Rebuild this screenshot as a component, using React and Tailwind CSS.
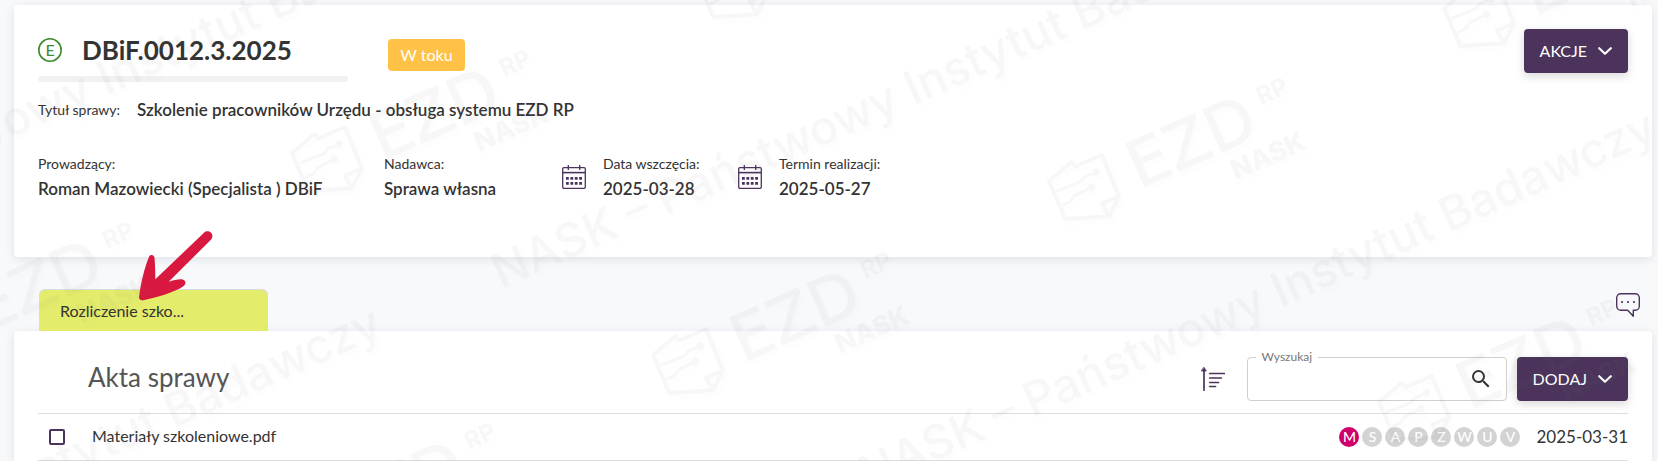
import { MdSearch } from 'react-icons/md';

const permissions = [
    { letter: 'M', active: true },
    { letter: 'S' },
    { letter: 'A' },
    { letter: 'P' },
    { letter: 'Z' },
    { letter: 'W' },
    { letter: 'U' },
    { letter: 'V' },
];

const files = [{ id: 1, name: 'Materiały szkoleniowe.pdf', date: '2025-03-31' }];

// Watermark positions, logo = top left corner of the document sign, text = start of the baseline
const watermarkLogos = [
    [-106, 297],
    [256, 498],
    [291, 125],
    [652, 327],
    [696, -49],
    [1048, 153],
    [1378, 374],
    [1443, -20],
];

const watermarkTexts = [
    [-306, 279],
    [-407, 687],
    [501, 289],
    [868, 491],
];

function Chevron() {
    return (
        <svg viewBox="0 0 14 8" className="w-[14px] h-2" fill="none" stroke="currentColor" strokeWidth="2.2" strokeLinecap="round" strokeLinejoin="round">
            <path d="M1.2 1.2 7 6.8l5.8-5.6" />
        </svg>
    );
}

function CalendarIcon() {
    return (
        <svg viewBox="0 0 24 24" className="size-6 mt-[10px] text-[#4b335b] shrink-0" fill="none" stroke="currentColor" strokeWidth="1.3">
            <rect x="0.7" y="2.7" width="22.6" height="20.6" rx="1.2" />
            <path d="M1 7.6h22" strokeWidth="1.6" />
            <path d="M6.3 0v5M17.7 0v5" />
            <path d="M4 13.4h16M4 18.4h16" strokeWidth="2.8" strokeDasharray="2.8 1.6" />
        </svg>
    );
}

function ChatIcon() {
    return (
        <svg viewBox="0 0 24 24" className="size-6" fill="none" stroke="currentColor" strokeWidth="1.4" strokeLinejoin="round">
            <path d="M4.7.7h14.6a4 4 0 0 1 4 4v8.6a4 4 0 0 1-4 4h-2v5.9l-5.6-5.9h-7a4 4 0 0 1-4-4V4.7a4 4 0 0 1 4-4Z" />
            <g fill="currentColor" stroke="none">
                <circle cx="6" cy="9" r="1.1" />
                <circle cx="12" cy="9" r="1.1" />
                <circle cx="18" cy="9" r="1.1" />
            </g>
        </svg>
    );
}

function SortIcon() {
    return (
        <svg viewBox="0 0 24 24" className="size-6" fill="none" stroke="currentColor" strokeWidth="1.7" strokeLinecap="round">
            <path d="M3 3v20.2" />
            <path d="M3 .5 5.3 4H.7Z" fill="currentColor" strokeWidth="0.8" strokeLinejoin="round" />
            <path d="M8.8 6.5h14.5M8.8 11h11.5M8.8 15.5h8.7M8.8 19.5h5.7" />
        </svg>
    );
}

function ElectronicIcon() {
    return (
        <svg viewBox="0 0 24 24" className="size-6 text-[#3f8a2e]" role="img" aria-label="Sprawa elektroniczna">
            <circle cx="12" cy="12" r="11.2" fill="none" stroke="currentColor" strokeWidth="1.6" />
            <text x="12" y="17.5" textAnchor="middle" fontFamily="Lato, sans-serif" fontSize="16" fill="currentColor">
                E
            </text>
        </svg>
    );
}

function Arrow() {
    return (
        <svg viewBox="0 0 270 270" className="absolute left-[116px] -top-[69px] size-[90px] pointer-events-none" fill="#d8183f" aria-hidden="true">
            <path d="M27 232C32 190 43 145 57 110C60 103 71 103 73 111C75 125 76 155 76 178L222 38C232 27 252 37 246 54C243 60 238 64 233 69L116 185C130 181 145 177 155 178C168 180 170 192 160 199C130 219 80 232 40 241C32 242 27 239 27 232Z" />
        </svg>
    );
}

function Watermark() {
    return (
        <svg
            className="absolute inset-0 w-full h-full overflow-hidden pointer-events-none opacity-[0.06] [filter:drop-shadow(3px_4px_2px_rgba(128,128,128,0.3))]"
            fill="#808080"
            aria-hidden="true"
        >
            {watermarkLogos.map(([x, y]) => (
                <g key={`${x}-${y}`} transform={`translate(${x} ${y})`} fontFamily="Inter, sans-serif">
                    <g transform="scale(0.333) translate(-145 -310)" fill="none" stroke="#808080" strokeWidth="12" strokeLinejoin="round">
                        <path d="M148 395 215 337l13 13 79-34 51 124-30 60-131 8Z" />
                        <path d="M358 440l-51 22 21 38" />
                        <path d="M170 425l72-28 13-15 35-15M188 468l24-11 13-19 50-25" strokeWidth="9" />
                        <circle cx="290" cy="367" r="11" fill="#808080" stroke="none" />
                        <circle cx="275" cy="413" r="11" fill="#808080" stroke="none" />
                    </g>
                    <text transform="translate(91 36) rotate(-24)" fontSize="64" fontFamily="DejaVu Sans, sans-serif" stroke="#808080">
                        EZD
                    </text>
                    <text transform="translate(213 -48) rotate(-24)" fontSize="24" fontWeight="700">
                        RP
                    </text>
                    <text transform="translate(188 27) rotate(-24)" fontSize="27" fontWeight="800">
                        NASK
                    </text>
                </g>
            ))}
            {watermarkTexts.map(([x, y]) => (
                <text
                    key={`${x}-${y}`}
                    transform={`translate(${x} ${y}) rotate(-24)`}
                    fontFamily="Inter, sans-serif"
                    fontSize="47"
                    fontWeight="500"
                >
                    NASK – Państwowy Instytut Badawczy
                </text>
            ))}
        </svg>
    );
}

function MenuButton({ label }) {
    return (
        <button
            type="button"
            aria-haspopup="menu"
            className="h-11 px-4 flex items-center gap-[11px] rounded bg-[#4b335b] text-white text-base shadow-[0_3px_10px_rgba(0,0,0,0.16)]"
        >
            {label}
            <Chevron />
        </button>
    );
}

function Detail({ label, value, icon }) {
    return (
        <div className="flex gap-[17px]">
            {icon}
            <dl>
                <dt className="text-sm leading-[18px]">{label}</dt>
                <dd className="mt-1 text-[17px] leading-6 font-semibold">{value}</dd>
            </dl>
        </div>
    );
}

function CaseHeader() {
    return (
        <section className="px-6 pt-6 pb-14 rounded bg-white shadow-[0_2px_10px_rgba(80,100,110,0.16)]">
            <div className="flex items-start">
                <div className="w-[310px]">
                    <div className="mt-2 h-[26px] flex items-center gap-5">
                        <ElectronicIcon />
                        <h1 className="text-[26px] leading-[26px] font-bold">DBiF.0012.3.2025</h1>
                    </div>
                    <div className="mt-[13px] h-[6px] rounded-full bg-[#f0f1f3]" />
                </div>
                <span className="ml-10 mt-[10px] h-8 px-3 min-w-[77px] flex items-center justify-center rounded bg-[#ffc247] text-white">W toku</span>
                <div className="ml-auto">
                    <MenuButton label="AKCJE" />
                </div>
            </div>
            <div className="mt-4 h-6 flex items-center gap-[17px]">
                <span className="text-sm">Tytuł sprawy:</span>
                <span className="text-[17px] font-semibold">Szkolenie pracowników Urzędu - obsługa systemu EZD RP</span>
            </div>
            <div className="mt-8 pt-px grid grid-cols-[346px_178px_176px_1fr]">
                <Detail label="Prowadzący:" value="Roman Mazowiecki (Specjalista ) DBiF" />
                <Detail label="Nadawca:" value="Sprawa własna" />
                <Detail label="Data wszczęcia:" value="2025-03-28" icon={<CalendarIcon />} />
                <Detail label="Termin realizacji:" value="2025-05-27" icon={<CalendarIcon />} />
            </div>
        </section>
    );
}

function CaseFiles() {
    return (
        <section className="grow px-6 pt-[26px] rounded-t bg-white shadow-[0_2px_10px_rgba(80,100,110,0.16)]">
            <div className="flex items-center">
                <h2 className="pl-[50px] pb-1 text-[26px] leading-8 text-[#555]">Akta sprawy</h2>
                <button type="button" aria-label="Sortuj" className="ml-auto text-[#4b335b]">
                    <SortIcon />
                </button>
                <div className="relative ml-[22px] mr-[10px] w-[260px] h-11 pr-[13px] flex items-center rounded border border-[#cfcfd1]">
                    <label htmlFor="search" className="absolute left-2 -top-2 px-[6px] bg-white text-xs leading-[14px] text-[#777]">
                        Wyszukaj
                    </label>
                    <input id="search" type="text" className="grow min-w-0 h-full px-3 outline-none bg-transparent" />
                    <button type="button" aria-label="Szukaj">
                        <MdSearch className="size-6" />
                    </button>
                </div>
                <MenuButton label="DODAJ" />
            </div>
            <table className="mt-3 w-full border-collapse">
                <tbody>
                    {files.map((file) => (
                        <tr key={file.id} className="h-[47px] border-y border-[#dcdddf]">
                            <td className="w-[54px] pl-[11px]">
                                <input
                                    type="checkbox"
                                    aria-label={file.name}
                                    className="block size-4 appearance-none rounded-xs border-2 border-[#4b335b] checked:bg-[#4b335b]"
                                />
                            </td>
                            <td className="pb-0.5">{file.name}</td>
                            <td>
                                <div className="flex items-center justify-end">
                                    <ul className="flex gap-[3px] mr-4">
                                        {permissions.map((p) => (
                                            <li
                                                key={p.letter}
                                                className={`size-5 flex items-center justify-center rounded-full text-sm leading-5 font-medium text-white ${
                                                    p.active ? 'bg-[#cf006c]' : 'bg-[#d3d3d3]'
                                                }`}
                                            >
                                                {p.letter}
                                            </li>
                                        ))}
                                    </ul>
                                    <time dateTime={file.date} className="min-w-[90px] text-[17px]">
                                        {file.date}
                                    </time>
                                </div>
                            </td>
                        </tr>
                    ))}
                </tbody>
            </table>
        </section>
    );
}

export default function App() {
    return (
        <div className="relative min-h-screen pl-[14px] pr-[6px] pt-[5px] flex flex-col overflow-hidden bg-[#f8f9fb] text-base text-[#333] font-['Lato',sans-serif]">
            <CaseHeader />
            <div className="relative mt-8 pl-[25px] pr-3 flex items-start">
                <button type="button" className="w-[229px] h-[42px] px-5 text-left rounded-t-md border border-b-0 border-[#dadbe0] bg-[#e4ec6b]">
                    Rozliczenie szko...
                </button>
                <button type="button" aria-label="Komentarze" className="ml-auto mt-1 text-[#4b335b]">
                    <ChatIcon />
                </button>
                <Arrow />
            </div>
            <CaseFiles />
            <Watermark />
        </div>
    );
}
